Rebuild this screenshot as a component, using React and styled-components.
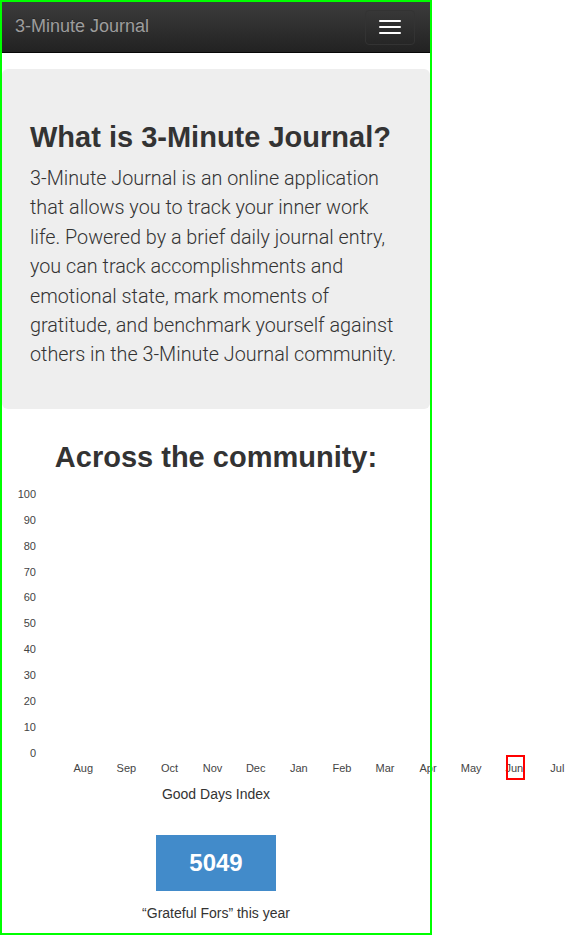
import React from 'react'
import styled, { createGlobalStyle } from 'styled-components'

const GlobalStyle = createGlobalStyle`
  body {
    margin: 0;
    background: #fff;
    font-family: "Liberation Sans", Arial, sans-serif;
    color: #333;
  }
`

const Page = styled.div`
  position: relative;
  width: 432px;
  height: 935px;
  padding: 2px;
  box-sizing: border-box;

  &::after {
    content: '';
    position: absolute;
    inset: 0;
    border: 2px solid #00ff00;
    pointer-events: none;
  }
`

const Navbar = styled.nav`
  display: flex;
  align-items: center;
  justify-content: space-between;
  height: 50px;
  padding: 0 15px 0 13px;
  background: linear-gradient(to bottom, #3c3c3c 0%, #222 100%);
  border-bottom: 1px solid #080808;
`

const Brand = styled.a`
  font-size: 18px;
  line-height: 20px;
  padding-bottom: 3px;
  color: #9d9d9d;
  text-shadow: 0 -1px 0 rgba(0, 0, 0, 0.25);
  text-decoration: none;
`

const Toggle = styled.button`
  display: flex;
  flex-direction: column;
  align-items: center;
  justify-content: center;
  gap: 4px;
  width: 50px;
  height: 35px;
  padding: 0;
  background: transparent;
  border: 1px solid #333;
  border-radius: 4px;
`

const Bar = styled.span`
  display: block;
  width: 22px;
  height: 2px;
  border-radius: 1px;
  background: #fff;
`

const Jumbotron = styled.section`
  margin-top: 16px;
  padding: 52px 28px 39px;
  background: #eee;
  border-radius: 6px;
`

const Heading = styled.h1`
  margin: 0;
  font-size: 29px;
  line-height: 32px;
  font-weight: 700;
  color: #333;
  text-align: ${props => (props.$center ? 'center' : 'left')};
`

const Lead = styled.p`
  margin: 11px 0 0;
  font-family: Roboto, "Liberation Sans", Arial, sans-serif;
  font-size: 19.8px;
  font-weight: 300;
  line-height: 29.4px;
  color: #333;
  white-space: nowrap;
`

const Community = styled.section`
  margin-top: 32px;
`

const Chart = styled.svg`
  display: block;
  margin-top: 7px;
  overflow: visible;
  font-family: "Liberation Sans", Arial, sans-serif;
  font-size: 11px;
  fill: #444;
`

const Caption = styled.div`
  margin-top: 2px;
  font-size: 14px;
  line-height: 20px;
  text-align: center;
`

const StatBox = styled.div`
  display: flex;
  align-items: center;
  justify-content: center;
  width: 120px;
  height: 56px;
  margin: 31px auto 0;
  background: #428bca;
  color: #fff;
  font-size: 24px;
  font-weight: 700;
`

const StatLabel = styled.div`
  margin-top: 12px;
  font-size: 14px;
  line-height: 20px;
  text-align: center;
`

const yTicks = [100, 90, 80, 70, 60, 50, 40, 30, 20, 10, 0]
const months = ['Aug', 'Sep', 'Oct', 'Nov', 'Dec', 'Jan', 'Feb', 'Mar', 'Apr', 'May', 'Jun', 'Jul']

const GoodDaysChart = () => (
  <Chart width="568" height="302">
    {yTicks.map((v, i) => (
      <text key={v} x="34" y={14 + i * 25.9} dy="0.35em" textAnchor="end">{v}</text>
    ))}
    {months.map((m, i) => (
      <text key={m} x={81.3 + i * 43.1} y="288" dy="0.35em" textAnchor="middle">{m}</text>
    ))}
    <rect x="505" y="276" width="17" height="23" fill="none" stroke="#ff0000" strokeWidth="2" />
  </Chart>
)

const App = () => {
  return (
    <Page>
      <GlobalStyle />
      <Navbar>
        <Brand href="#">3-Minute Journal</Brand>
        <Toggle type="button" aria-label="Toggle navigation">
          <Bar />
          <Bar />
          <Bar />
        </Toggle>
      </Navbar>

      <Jumbotron>
        <Heading>What is 3-Minute Journal?</Heading>
        <Lead>
          3-Minute Journal is an online application<br />
          that allows you to track your inner work<br />
          life. Powered by a brief daily journal entry,<br />
          you can track accomplishments and<br />
          emotional state, mark moments of<br />
          gratitude, and benchmark yourself against<br />
          others in the 3-Minute Journal community.
        </Lead>
      </Jumbotron>

      <Community>
        <Heading $center>Across the community:</Heading>
        <GoodDaysChart />
        <Caption>Good Days Index</Caption>
        <StatBox>5049</StatBox>
        <StatLabel>“Grateful Fors” this year</StatLabel>
      </Community>
    </Page>
  )
}

export default App
